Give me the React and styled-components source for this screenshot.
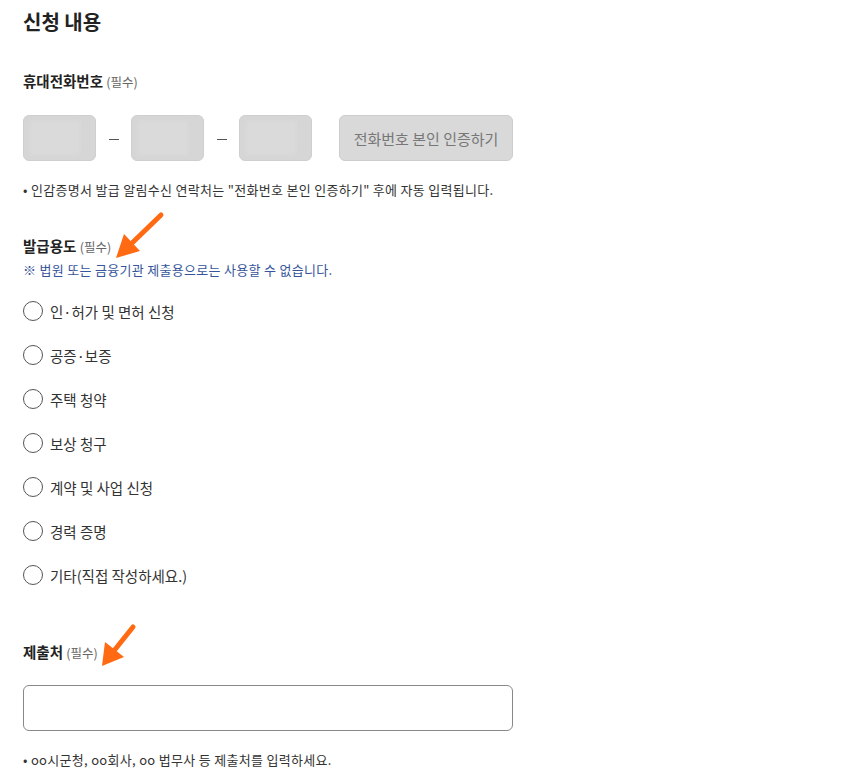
import React from 'react';
import styled, { createGlobalStyle } from "styled-components";

const GlobalStyle = createGlobalStyle`
  body {
    margin: 0;
    background: #fff;
    font-family: "Noto Sans CJK KR", "Noto Sans", sans-serif;
    color: #222;
  }
`;

const purposes = [
  "인·허가 및 면허 신청",
  "공증·보증",
  "주택 청약",
  "보상 청구",
  "계약 및 사업 신청",
  "경력 증명",
  "기타(직접 작성하세요.)",
];

function App() {
  return (
    <Page>
      <GlobalStyle />
      <Title>신청 내용</Title>

      <Label $top={37}>휴대전화번호 <Req>(필수)</Req></Label>
      <PhoneRow>
        <PhoneBox><Blur /></PhoneBox>
        <Dash />
        <PhoneBox><Blur /></PhoneBox>
        <Dash />
        <PhoneBox><Blur /></PhoneBox>
        <VerifyButton>전화번호 본인 인증하기</VerifyButton>
      </PhoneRow>
      <Note $top={20}>• 인감증명서 발급 알림수신 연락처는 "전화번호 본인 인증하기" 후에 자동 입력됩니다.</Note>

      <Label $top={37}>발급용도 <Req>(필수)</Req></Label>
      <Warning>※ 법원 또는 금융기관 제출용으로는 사용할 수 없습니다.</Warning>
      <RadioList>
        {purposes.map((p) => (
          <RadioRow key={p}>
            <Circle />
            <span>{p}</span>
          </RadioRow>
        ))}
      </RadioList>

      <Label $top={45}>제출처 <Req>(필수)</Req></Label>
      <TextBox />
      <Note $top={20}>• oo시군청, oo회사, oo 법무사 등 제출처를 입력하세요.</Note>

      <Arrows viewBox="0 0 843 778">
        <line x1="161" y1="215" x2="130" y2="245" stroke="#ff6a12" strokeWidth="5" strokeLinecap="round" />
        <polygon points="116,258 124,234 140,251" fill="#ff6a12" />
        <line x1="133" y1="627" x2="113" y2="652" stroke="#ff6a12" strokeWidth="5" strokeLinecap="round" />
        <polygon points="102,666 105,642 124,657" fill="#ff6a12" />
      </Arrows>
    </Page>
  );
}

const Page = styled.div`
  position: relative;
  width: 843px;
  height: 778px;
  box-sizing: border-box;
  padding: 10px 0 0 23px;
  overflow: hidden;
`;

const Title = styled.h2`
  margin: 0;
  font-size: 20px;
  line-height: 24px;
  font-weight: 700;
  color: #222;
`;

const Label = styled.div`
  margin-top: ${(p) => p.$top}px;
  font-size: 14.5px;
  line-height: 20px;
  font-weight: 700;
  color: #222;
`;

const Req = styled.span`
  font-size: 12.5px;
  font-weight: 400;
  color: #666;
`;

const PhoneRow = styled.div`
  display: flex;
  align-items: center;
  margin-top: 23px;
  height: 46px;
`;

const PhoneBox = styled.div`
  position: relative;
  width: 73px;
  height: 46px;
  box-sizing: border-box;
  border: 1px solid #cfcfcf;
  border-radius: 6px;
  background: #d6d6d6;
  overflow: hidden;
`;

const Blur = styled.div`
  position: absolute;
  left: 6px;
  top: 5px;
  width: 50px;
  height: 34px;
  background: #dadada;
  filter: blur(2px);
`;

const Dash = styled.span`
  display: flex;
  justify-content: center;
  width: 35px;

  &::before {
    content: "";
    width: 10px;
    height: 1px;
    margin-top: 2px;
    background: #555;
  }
`;

const VerifyButton = styled.button`
  margin-left: 27px;
  width: 174px;
  height: 46px;
  border: 1px solid #cdcdcd;
  border-radius: 6px;
  background: #d9d9d9;
  color: #777;
  font-family: inherit;
  font-size: 15px;
  padding: 0;
`;

const Note = styled.div`
  margin-top: ${(p) => p.$top}px;
  font-size: 13px;
  letter-spacing: 0.3px;
  line-height: 18px;
  color: #333;
`;

const Warning = styled.div`
  margin-top: 4px;
  font-size: 13px;
  letter-spacing: 0.3px;
  line-height: 18px;
  color: #36559a;
`;

const RadioList = styled.div`
  display: flex;
  flex-direction: column;
  margin-top: 10px;
`;

const RadioRow = styled.label`
  display: flex;
  align-items: center;
  gap: 7px;
  height: 44px;
  font-size: 14.5px;
  color: #333;
`;

const Circle = styled.span`
  width: 20px;
  height: 20px;
  box-sizing: border-box;
  border: 1px solid #555;
  border-radius: 50%;
  background: #fff;
`;

const TextBox = styled.div`
  margin-top: 22px;
  width: 490px;
  height: 46px;
  box-sizing: border-box;
  border: 1px solid #888;
  border-radius: 6px;
  background: #fff;
`;

const Arrows = styled.svg`
  position: absolute;
  top: 0;
  left: 0;
  width: 843px;
  height: 778px;
  pointer-events: none;
`;

export default App
